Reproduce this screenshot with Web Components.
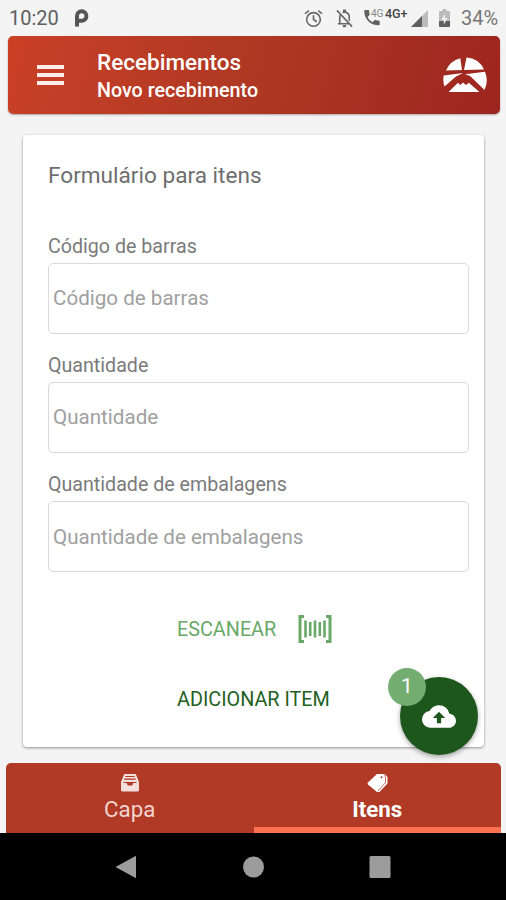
<!DOCTYPE html>
<html lang="pt-BR">
<head>
<meta charset="utf-8">
<meta name="viewport" content="width=device-width, initial-scale=1">
<title>Recebimentos</title>
<style>
  html, body {
    margin: 0;
    height: 100%;
    background: #f4f4f4;
    font-family: Roboto, "Liberation Sans", sans-serif;
  }
</style>
</head>
<body>
<receipt-app></receipt-app>

<script>
// Android status bar
class StatusBar extends HTMLElement {
  constructor() {
    super();
    this.attachShadow({ mode: 'open' });
  }

  connectedCallback() {
    this.shadowRoot.innerHTML = `
      <style>
        :host {
          display: flex;
          justify-content: space-between;
          align-items: center;
          height: 36px;
          padding: 0 8px 0 9px;
          box-sizing: border-box;
          color: #606060;
          font-size: 20px;
          line-height: 36px;
        }
        div { display: flex; align-items: center; }
        svg { display: block; }
        .time { width: 65px; }
        .small { font-size: 10px; line-height: 10px; margin: -9px 0 0 -10px; width: 12px; color: #888; }
        .net { font-size: 12.500px; line-height: 12px; font-weight: 500; margin: -9px 1px 0 2px; width: 25px; color: #444; }
        .level { width: 37px; text-align: right; color: #777; }
      </style>
      <div>
        <span class="time">10:20</span>
        <svg width="15" height="18" viewBox="0 0 15 18" fill="none" stroke="#555" stroke-width="4">
          <path d="M3 17.500V7a4.700 4.700 0 1 1 4.700 4.700H5"/>
        </svg>
      </div>
      <div>
        <svg width="19" height="19" viewBox="0 0 20 20" fill="none" stroke="#666" stroke-width="1.7">
          <circle cx="10" cy="11" r="7.200"/><path d="M10 6.500V11l3.500 2.400M1 5l4-3.400M19 5l-4-3.400"/>
        </svg>
        <svg style="margin-left:12px" width="19" height="19" viewBox="0 0 20 20" fill="none" stroke="#666" stroke-width="1.7">
          <path d="M2 1.500l16 17M3 15.500h12.500M5 15V8.500q0-1.500.8-2.800M8 3.800q.8-.4 1.300-.5V1.500h1.400v1.800Q15 4.200 15 8.500v3.800"/>
          <path d="M8.300 18h3.400" stroke-width="2.200"/>
        </svg>
        <svg style="margin-left:9px" width="18" height="18" viewBox="0 0 18 18" fill="#606060">
          <path d="M2 1h3.300q.8 0 .8.8 0 1.800.6 3.400.2.5-.2.9L4.500 8.200q1.800 3.400 5 5l2-2q.4-.4.9-.2 1.600.6 3.500.6.8 0 .8.8v3q0 .8-.8.8Q9.500 16.200 5.100 11.900 1.200 7.800 1.200 1.800 1.200 1 2 1z"/>
        </svg>
        <span class="small">4G</span>
        <span class="net">4G+</span>
        <svg width="17" height="17" viewBox="0 0 17 17">
          <path d="M0 17L17 0v17z" fill="#bbb"/><path d="M0 17L11 6v11z" fill="#606060"/>
        </svg>
        <svg style="margin-left:11px" width="11" height="18" viewBox="0 0 11 18">
          <path d="M3.500 0h4v2H10q1 0 1 1v14q0 1-1 1H1q-1 0-1-1V3q0-1 1-1h2.500z" fill="#bbb"/>
          <path d="M0 12h11v5q0 1-1 1H1q-1 0-1-1z" fill="#606060"/>
          <path d="M5.800 4.500L2.500 11h2.300v4.500L8.500 9H5.800z" fill="#f4f4f4"/>
        </svg>
        <span class="level" style="margin-left:11px">34%</span>
      </div>
    `;
  }
}
customElements.define('status-bar', StatusBar);

// Red header with menu, titles and brand mark
class AppHeader extends HTMLElement {
  constructor() {
    super();
    this.attachShadow({ mode: 'open' });
  }

  connectedCallback() {
    this.shadowRoot.innerHTML = `
      <style>
        :host {
          display: flex;
          align-items: center;
          height: 78px;
          margin: 0 6px 0 8px;
          padding: 0 13px 0 29px;
          box-sizing: border-box;
          border-radius: 5px;
          background: linear-gradient(105deg, #ca4027 0%, #ae3823 50%, #9d251f 100%);
          box-shadow: 0 1px 2px rgba(0, 0, 0, 0.3);
          color: #fff;
        }
        .menu { display: flex; flex-direction: column; gap: 4px; width: 27px; }
        .menu i { height: 4px; background: #fbeeea; }
        .titles { flex: 1; margin-left: 33px; padding-top: 4px; }
        h1, h2 { margin: 0; font-weight: 500; white-space: nowrap; }
        h1 { font-size: 22.500px; line-height: 28px; }
        h2 { font-size: 19.700px; line-height: 30px; }
        svg { display: block; }
      </style>
      <div class="menu"><i></i><i></i><i></i></div>
      <div class="titles">
        <h1><slot name="title"></slot></h1>
        <h2><slot name="subtitle"></slot></h2>
      </div>
      <svg width="44" height="36" viewBox="0 0 44 36" fill="#fff">
        <path d="M3 13.500Q7 4 17.300 1.300L19 13z"/>
        <path d="M23.500 .6Q36 1.500 41 12.500L21 13z"/>
        <path d="M.8 18.500L20 16 13 19.500 1.500 29.500Q-.5 24 .8 18.500z"/>
        <path d="M42 14.800Q45.800 24 41.500 33L27 19 22 17.300z"/>
        <path d="M5.500 35L15 25.800 17.300 28 20 25.500 23 28 25.800 25.800 36.500 35z"/>
      </svg>
    `;
  }
}
customElements.define('app-header', AppHeader);

// Label with an outlined text box
class FormField extends HTMLElement {
  constructor() {
    super();
    this.attachShadow({ mode: 'open' });
  }

  connectedCallback() {
    const label = this.getAttribute('label');
    this.shadowRoot.innerHTML = `
      <style>
        :host { display: block; height: 119.300px; color: #7a7a7a; }
        label { display: block; font-size: 19.650px; line-height: 29px; padding-bottom: 2px; white-space: nowrap; }
        .box {
          display: flex;
          align-items: center;
          height: 71px;
          padding: 0 4px;
          box-sizing: border-box;
          border: 1.500px solid #d9d9d9;
          border-radius: 5px;
          font-size: 20.600px;
          color: #a0a0a0;
        }
      </style>
      <label>${label}</label>
      <div class="box"><span>${label}</span></div>
    `;
  }
}
customElements.define('form-field', FormField);

class FlatButton extends HTMLElement {
  constructor() {
    super();
    this.attachShadow({ mode: 'open' });
  }

  connectedCallback() {
    this.shadowRoot.innerHTML = `
      <style>
        :host {
          display: flex;
          align-items: center;
          height: 70px;
          padding-left: 129px;
          color: #235f22;
          font-size: 19.800px;
          white-space: nowrap;
        }
        :host([light]) { color: #69a866; margin-top: 5.500px; }
        ::slotted(svg) { margin: -2px 0 0 22px; }
      </style>
      <slot></slot><slot name="icon"></slot>
    `;
  }
}
customElements.define('flat-button', FlatButton);

class FormCard extends HTMLElement {
  constructor() {
    super();
    this.attachShadow({ mode: 'open' });
  }

  connectedCallback() {
    this.shadowRoot.innerHTML = `
      <style>
        :host {
          display: block;
          margin: 21px 22px 0 23px;
          height: 612px;
          padding: 27px 15px 0 25px;
          box-sizing: border-box;
          background: #fff;
          border-radius: 4px;
          box-shadow: 0 1px 3px rgba(0, 0, 0, 0.4);
        }
        h3 { margin: 0 0 41.500px; font-size: 22.600px; line-height: 28px; font-weight: 400; color: #6e6e6e; white-space: nowrap; }
      </style>
      <h3><slot name="heading"></slot></h3>
      <slot></slot>
    `;
  }
}
customElements.define('form-card', FormCard);

// Floating upload button with a counter badge
class UploadFab extends HTMLElement {
  constructor() {
    super();
    this.attachShadow({ mode: 'open' });
  }

  connectedCallback() {
    this.shadowRoot.innerHTML = `
      <style>
        :host {
          position: absolute;
          left: 400px;
          top: 677px;
          display: flex;
          align-items: center;
          justify-content: center;
          width: 78px;
          height: 78px;
          border-radius: 50%;
          background: #1d571c;
          box-shadow: 0 2px 5px rgba(0, 0, 0, 0.35);
        }
        .badge {
          position: absolute;
          left: -12px;
          top: -9px;
          width: 38px;
          height: 38px;
          border-radius: 50%;
          background: #73ad70;
          color: #fff;
          font-size: 21px;
          line-height: 36px;
          text-align: center;
        }
      </style>
      <svg width="34" height="23" viewBox="0 0 24 16">
        <path fill="#fff" d="M19.350 6.040A7.490 7.490 0 0 0 12 0C9.110 0 6.600 1.640 5.350 4.040A5.994 5.994 0 0 0 0 10c0 3.310 2.690 6 6 6h13c2.760 0 5-2.240 5-5 0-2.640-2.050-4.780-4.650-4.960z"/>
        <path fill="#1d571c" d="M12 4.600L16.300 9H13.500v3.700h-3V9H7.700z"/>
      </svg>
      <span class="badge">${this.getAttribute('count')}</span>
    `;
  }
}
customElements.define('upload-fab', UploadFab);

class TabItem extends HTMLElement {
  constructor() {
    super();
    this.attachShadow({ mode: 'open' });
  }

  connectedCallback() {
    this.shadowRoot.innerHTML = `
      <style>
        :host {
          flex: 1;
          display: flex;
          flex-direction: column;
          align-items: center;
          box-sizing: border-box;
          padding-top: 9px;
          font-size: 22.300px;
          line-height: 28px;
          color: #f0d5d0;
          border-bottom: 6px solid transparent;
        }
        :host([active]) { color: #fff; font-weight: 700; border-bottom-color: #fb7150; }
        ::slotted(svg) { display: block; height: 21px; margin-bottom: 2px; }
      </style>
      <slot name="icon"></slot><span><slot></slot></span>
    `;
  }
}
customElements.define('tab-item', TabItem);

class TabBar extends HTMLElement {
  constructor() {
    super();
    this.attachShadow({ mode: 'open' });
  }

  connectedCallback() {
    this.shadowRoot.innerHTML = `
      <style>
        :host {
          display: flex;
          height: 70px;
          margin: 16px 5px 0 6px;
          background: #b03a25;
          border-radius: 5px 5px 0 0;
          overflow: hidden;
        }
      </style>
      <slot></slot>
    `;
  }
}
customElements.define('tab-bar', TabBar);

// Android navigation buttons
class NavButtons extends HTMLElement {
  constructor() {
    super();
    this.attachShadow({ mode: 'open' });
  }

  connectedCallback() {
    this.shadowRoot.innerHTML = `
      <style>
        :host {
          display: grid;
          grid-template-columns: repeat(3, 127px);
          justify-content: center;
          align-items: center;
          justify-items: center;
          flex: 1;
          background: #000;
        }
      </style>
      <svg width="22" height="24" viewBox="0 0 22 24"><path d="M.5 12L21 .8v22.400z" fill="#9c9c9c"/></svg>
      <svg width="22" height="22" viewBox="0 0 22 22"><circle cx="11.500" cy="11" r="10.500" fill="#9c9c9c"/></svg>
      <svg width="22" height="22" viewBox="0 0 22 22"><rect x=".5" width="21" height="22" rx="1.500" fill="#9c9c9c"/></svg>
    `;
  }
}
customElements.define('nav-buttons', NavButtons);

class ReceiptApp extends HTMLElement {
  constructor() {
    super();
    this.attachShadow({ mode: 'open' });
  }

  connectedCallback() {
    this.shadowRoot.innerHTML = `
      <style>
        :host {
          position: relative;
          display: flex;
          flex-direction: column;
          width: 506px;
          height: 900px;
          overflow: hidden;
          background: #f4f4f4;
        }
      </style>
      <status-bar></status-bar>
      <app-header>
        <span slot="title">Recebimentos</span>
        <span slot="subtitle">Novo recebimento</span>
      </app-header>
      <form-card>
        <span slot="heading">Formulário para itens</span>
        <form-field label="Código de barras"></form-field>
        <form-field label="Quantidade"></form-field>
        <form-field label="Quantidade de embalagens"></form-field>
        <flat-button light>ESCANEAR
          <svg slot="icon" width="34" height="28" viewBox="0 0 34 28" fill="none" stroke="#69a866">
            <path d="M6 1.500H2v25h4M28 1.500h4v25h-4" stroke-width="3"/>
            <path d="M7.500 5.500v17M12.200 7v14M17 5.500v17M21.800 7v14M26.500 5.500v17" stroke-width="2.600"/>
          </svg>
        </flat-button>
        <flat-button>ADICIONAR ITEM</flat-button>
      </form-card>
      <tab-bar>
        <tab-item>
          <svg slot="icon" width="20" height="21" viewBox="0 0 20 21">
            <path d="M5 2h10q.8 0 1.100.8L19 10v8q0 1.500-1.500 1.500h-15Q1 19.500 1 18v-8l2.900-7.200Q4.200 2 5 2z" fill="#f2dfdb"/>
            <path d="M5.300 4.500h9.400M4.300 7.200h11.400M3.500 10.500h13" stroke="#b03a25" stroke-width="1.200"/>
            <path d="M6.500 10.500h7l-1.300 3H7.800z" fill="#b03a25"/>
          </svg>
          Capa
        </tab-item>
        <tab-item active>
          <svg slot="icon" width="21" height="21" viewBox="0 0 21 21">
            <path d="M10 2h7.500L20.500 5v6.500L12.500 20H10L1 12.500Q0 11.500 1 10.500z" fill="#fff"/>
            <path d="M17 2.500l1.500 2.500v5.500L11 19" fill="none" stroke="#b03a25" stroke-width=".7"/>
            <circle cx="14.500" cy="5.300" r="1" fill="#b03a25"/>
          </svg>
          Itens
        </tab-item>
      </tab-bar>
      <nav-buttons></nav-buttons>
      <upload-fab count="1"></upload-fab>
    `;
  }
}
customElements.define('receipt-app', ReceiptApp);
</script>
</body>
</html>
